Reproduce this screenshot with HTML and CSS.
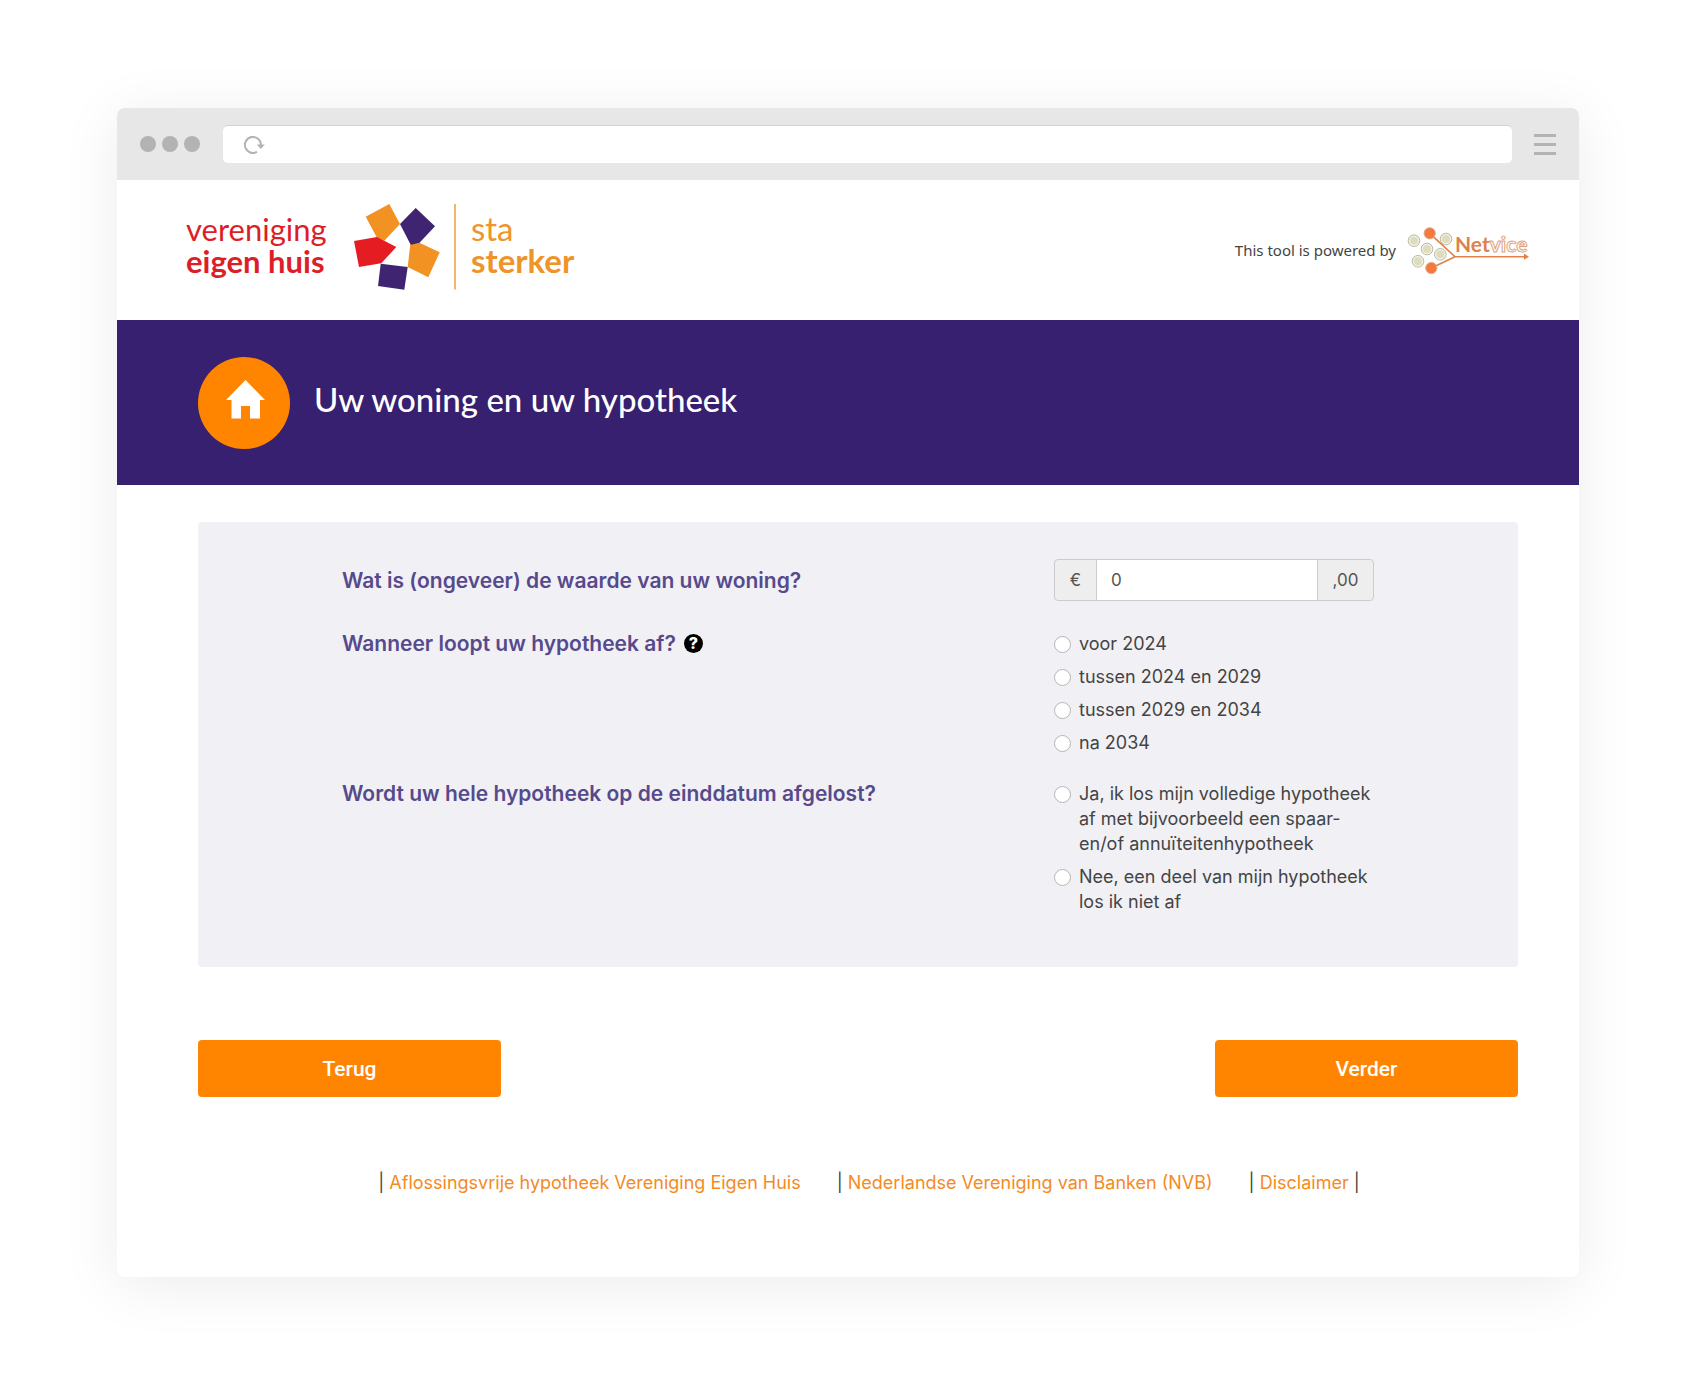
FILE: index.html
```html
<!DOCTYPE html>
<html lang="nl">
  <head>
    <meta charset="UTF-8">
    <title>Uw woning en uw hypotheek</title>
    <meta name="viewport" content="width=device-width, initial-scale=1">
    <link rel="stylesheet" href="styles.css">
  </head>
  <body>
    <div class="window">
      <div class="toolbar">
        <div class="dots"><span></span><span></span><span></span></div>
        <div class="address">
          <svg width="22" height="22" viewBox="0 0 22 22" aria-hidden="true">
            <path d="M14 17.8A8 8 0 1 1 17.9 11" fill="none" stroke="#b3b3b3" stroke-width="2"/>
            <path d="M13.8 10.5h8L17.8 15z" fill="#b3b3b3"/>
          </svg>
        </div>
        <div class="menu"><span></span><span></span><span></span></div>
      </div>

      <header class="header">
        <svg class="logo" width="400" height="92" viewBox="0 0 400 92">
          <text class="logo-light red" x="0" y="37">vereniging</text>
          <text class="logo-bold red" x="0" y="69">eigen huis</text>
          <polygon fill="#f29222" points="203.3,0 214,20 198.3,36.7 190.7,33.3 179.7,12.7"/>
          <polygon fill="#f29222" points="234,39 253.7,48.3 242.3,73.3 221.7,63 224.3,40.3"/>
          <polygon fill="#3f2472" points="229.7,4 249,22.3 233.3,39 224.7,40.7 214,20"/>
          <polygon fill="#3f2472" points="194.7,59.7 221.7,63 218.3,85.7 192,82"/>
          <polygon fill="#e51d23" points="168,37 191,33 210.3,43 195.3,59.3 173,63"/>
          <path d="M269 0v85.5" stroke="#f7b56c" stroke-width="2"/>
          <text class="logo-light orange" x="285" y="37">sta</text>
          <text class="logo-bold orange" x="285" y="69">sterker</text>
        </svg>
        <div class="powered">
          <span>This tool is powered by</span>
          <svg width="126" height="50" viewBox="0 0 126 50">
            <path d="M23.7 8.3L49 31.7L25.3 43M49 31.7H119" fill="none" stroke="#e0814a" stroke-width="1.6"/>
            <path d="M118 28.6l5 3.1l-5 3.1z" fill="#e0814a"/>
            <g fill="#dddcbf" stroke="#b9b8a4" stroke-width="1">
              <circle cx="8" cy="15.7" r="5.8"/>
              <circle cx="40" cy="14" r="5.8"/>
              <circle cx="21" cy="24" r="5.8"/>
              <circle cx="34.3" cy="29.3" r="5.8"/>
              <circle cx="12" cy="36.3" r="5.8"/>
            </g>
            <g fill="none" stroke="#f3f2e4" stroke-width="1.2">
              <circle cx="8" cy="15.7" r="4.6"/>
              <circle cx="40" cy="14" r="4.6"/>
              <circle cx="21" cy="24" r="4.6"/>
              <circle cx="34.3" cy="29.3" r="4.6"/>
              <circle cx="12" cy="36.3" r="4.6"/>
            </g>
            <g fill="#f5793a" stroke="#e2a889" stroke-width="1">
              <circle cx="23.7" cy="8.3" r="5.6"/>
              <circle cx="25.3" cy="43" r="5.6"/>
            </g>
            <text class="netvice" x="49" y="27">Net<tspan class="netvice-outline">vice</tspan></text>
          </svg>
        </div>
      </header>

      <div class="banner">
        <div class="banner-icon">
          <svg width="40" height="40" viewBox="0 0 40 40" aria-hidden="true">
            <path fill="#fff" d="M21.5 0L41 20H36V38.5H26V26H17V38.5H7.500V20H2z"/>
          </svg>
        </div>
        <h1>Uw woning en uw hypotheek</h1>
      </div>

      <main class="content">
        <form>
          <div class="panel">
            <div class="row">
              <label class="question" for="waarde">Wat is (ongeveer) de waarde van uw woning?</label>
              <div class="input-group">
                <span class="addon">€</span>
                <input type="text" id="waarde" value="0">
                <span class="addon addon-right">,00</span>
              </div>
            </div>

            <div class="row" role="radiogroup" aria-labelledby="looptijd-label">
              <div class="question">
                <span id="looptijd-label">Wanneer loopt uw hypotheek af?</span>
                <button type="button" class="help">?</button>
              </div>
              <div class="options">
                <label><input type="radio" name="looptijd"><span>voor 2024</span></label>
                <label><input type="radio" name="looptijd"><span>tussen 2024 en 2029</span></label>
                <label><input type="radio" name="looptijd"><span>tussen 2029 en 2034</span></label>
                <label><input type="radio" name="looptijd"><span>na 2034</span></label>
              </div>
            </div>

            <div class="row" role="radiogroup" aria-labelledby="aflossen-label">
              <div class="question" id="aflossen-label">Wordt uw hele hypotheek op de einddatum afgelost?</div>
              <div class="options">
                <label><input type="radio" name="aflossen"><span>Ja, ik los mijn volledige hypotheek<br>af met bijvoorbeeld een spaar-<br>en/of annuïteitenhypotheek</span></label>
                <label><input type="radio" name="aflossen"><span>Nee, een deel van mijn hypotheek<br>los ik niet af</span></label>
              </div>
            </div>
          </div>

          <div class="buttons">
            <button type="button" class="btn">Terug</button>
            <button type="button" class="btn">Verder</button>
          </div>
        </form>
      </main>

      <footer class="footer">
        <span>| <a href="#">Aflossingsvrije hypotheek Vereniging Eigen Huis</a></span>
        <span>| <a href="#">Nederlandse Vereniging van Banken (NVB)</a></span>
        <span>| <a href="#">Disclaimer</a> |</span>
      </footer>
    </div>
  </body>
</html>
```

FILE: styles.css
```css
* {
  box-sizing: border-box;
}
body {
  margin: 0;
  padding: 108px 117px;
  background-color: #fff;
  color: #444;
  font-family: Inter, "Open Sans", sans-serif;
  font-size: 18px;
  line-height: 25px;
}
.window {
  border-radius: 8px;
  overflow: hidden;
  background-color: #fff;
  box-shadow: 0 8px 60px rgba(0, 0, 0, 0.08);
}

/* browser bar */
.toolbar {
  display: flex;
  align-items: center;
  gap: 22px;
  height: 72px;
  padding: 0 23px;
  background-color: #e7e7e7;
}
.dots {
  display: flex;
  gap: 6px;
  margin-right: 1px;
}
.dots span {
  width: 16px;
  height: 16px;
  border-radius: 50%;
  background-color: #b3b3b3;
}
.address {
  flex: 1;
  display: flex;
  align-items: center;
  height: 38px;
  padding-left: 20px;
  border-top: 1px solid #d2d2d2;
  border-radius: 5px;
  background-color: #fff;
}
.menu {
  display: flex;
  flex-direction: column;
  gap: 6px;
}
.menu span {
  width: 22px;
  height: 3px;
  background-color: #b3b3b3;
}

/* logos */
.header {
  display: flex;
  align-items: center;
  justify-content: space-between;
  height: 140px;
  padding: 0 47px 0 69px;
}
.logo-light,
.logo-bold {
  font-family: Lato, sans-serif;
  font-size: 31px;
}
.logo-bold {
  font-weight: bold;
}
.red {
  fill: #dc1e28;
}
.orange {
  fill: #ee9428;
  font-size: 33px;
}
.powered {
  display: flex;
  align-items: center;
  gap: 10px;
  color: #444;
  font-family: "Noto Sans", sans-serif;
  font-size: 15px;
}
.netvice {
  fill: #e0814a;
  font-family: Lato, sans-serif;
  font-size: 21px;
  font-weight: bold;
}
.netvice-outline {
  fill: #fff;
  stroke: #e0a27c;
  stroke-width: 1px;
}

.banner {
  display: flex;
  align-items: center;
  gap: 24px;
  height: 165px;
  padding: 0 81px;
  background-color: #37206f;
}
.banner-icon {
  display: flex;
  align-items: center;
  justify-content: center;
  width: 92px;
  height: 92px;
  padding-bottom: 6px;
  border-radius: 50%;
  background-color: #ff8400;
}
.banner-icon svg {
  overflow: visible;
}
h1 {
  margin: 0;
  padding-bottom: 8px;
  color: #fff;
  font-family: Lato, sans-serif;
  font-size: 33px;
  font-weight: 500;
  line-height: 48px;
}

.content {
  padding: 37px 61px 0 81px;
}
.panel {
  padding: 37px 144px 53px;
  border-radius: 4px;
  background-color: #f1f0f5;
}
.row {
  display: grid;
  grid-template-columns: 1fr 320px;
  margin-bottom: 26px;
}
.row:first-child {
  margin-bottom: 30px;
}
.row:last-child {
  margin-bottom: 0;
}
.question {
  display: flex;
  align-items: center;
  align-self: start;
  gap: 8px;
  color: #564a8c;
  font-size: 21px;
  font-weight: 600;
}
.row:first-child .question {
  align-self: center;
}
.help {
  width: 19px;
  height: 19px;
  padding: 0;
  border: 0;
  border-radius: 50%;
  background-color: #000;
  color: #fff;
  font-family: inherit;
  font-size: 16px;
  font-weight: 800;
  line-height: 19px;
}
.input-group {
  display: flex;
  height: 42px;
  border: 1px solid #ccc;
  border-radius: 4px;
  background-color: #eee;
  color: #555;
  font-size: 17px;
}
.addon {
  width: 41px;
  line-height: 40px;
  text-align: center;
}
.addon-right {
  width: 55px;
}
.input-group input {
  flex: 1;
  min-width: 0;
  padding: 0 14px;
  border: 1px solid #ccc;
  border-width: 0 1px;
  background-color: #fff;
  color: #555;
  font-family: inherit;
  font-size: 17px;
}
.options {
  display: flex;
  flex-direction: column;
  gap: 8px;
}
.options label {
  display: flex;
  align-items: flex-start;
  gap: 8px;
}
.options input {
  flex: none;
  appearance: none;
  width: 17px;
  height: 17px;
  margin: 5px 0 0;
  border: 1px solid #b5b5b5;
  border-radius: 50%;
  background-color: #fff;
}
.options input:checked {
  border: 5px solid #ff8400;
}

.buttons {
  display: flex;
  justify-content: space-between;
  margin-top: 73px;
}
.btn {
  width: 303px;
  height: 57px;
  border: 0;
  border-radius: 4px;
  background-color: #ff8400;
  color: #fff;
  font-family: Roboto, Arial, sans-serif;
  font-size: 21px;
  font-weight: 500;
}
.footer {
  display: flex;
  justify-content: center;
  gap: 36px;
  padding: 73px 0 82px 42px;
}
.footer a {
  color: #f58a1f;
  text-decoration: none;
}
.footer a:hover {
  text-decoration: underline;
}
```
